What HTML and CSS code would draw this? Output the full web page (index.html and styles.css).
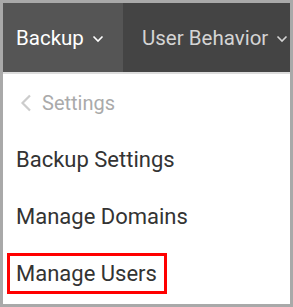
FILE: index.html
```html
<!DOCTYPE html>
<html>
<head>
<meta charset="utf-8">
<link rel="stylesheet" href="styles.css">
</head>
<body>
<div class="frame">
  <div class="header">
    <div class="tab tab-active">Backup <svg class="caret" width="12" height="8" viewBox="0 0 12 8"><path d="M1.5 1.5 L6 6 L10.5 1.5" fill="none" stroke="currentColor" stroke-width="1.6"/></svg></div>
    <div class="tab tab-other">User Behavior <svg class="caret" width="12" height="8" viewBox="0 0 12 8"><path d="M1.5 1.5 L6 6 L10.5 1.5" fill="none" stroke="currentColor" stroke-width="1.6"/></svg></div>
  </div>
  <div class="menu">
    <div class="row back"><svg class="back-icon" width="12" height="18" viewBox="0 0 12 18"><path d="M10 1.5 L2.5 9 L10 16.5" fill="none" stroke="currentColor" stroke-width="2.2"/></svg><span>Settings</span></div>
    <div class="row">Backup Settings</div>
    <div class="row">Manage Domains</div>
    <div class="row"><span class="highlight">Manage Users</span></div>
  </div>
</div>
</body>
</html>
```
FILE: styles.css
```css
html, body { margin: 0; padding: 0; background: #fff; }
.frame {
  width: 293px;
  height: 307px;
  box-sizing: border-box;
  border: 3px solid #a9a9a9;
  font-family: Roboto, "Liberation Sans", sans-serif;
  overflow: hidden;
  background: #fff;
}
.header {
  display: flex;
  height: 69px;
  border-bottom: 2px solid #dcdcdc;
}
.tab {
  display: flex;
  align-items: center;
  font-size: 20.5px;
  white-space: nowrap;
}
.tab-active {
  width: 120px;
  flex: none;
  box-sizing: border-box;
  padding-left: 13px;
  background: #555555;
  color: #ffffff;
}
.tab-other {
  flex: 1;
  padding-left: 19px;
  background: #444444;
  color: #d4d4d4;
  overflow: hidden;
}
.caret { margin-left: 8px; margin-top: 2px; }
.menu { display: flex; flex-direction: column; }
.row {
  height: 57px;
  display: flex;
  align-items: center;
  padding-left: 13px;
  font-size: 22px;
  color: #333333;
}
.back { color: #aaaaaa; font-size: 20px; }
.back-icon { color: #cccccc; margin-left: 4px; margin-right: 10px; }
.row:last-child { padding-left: 4px; }
.highlight {
  border: 3px solid #ff0000;
  padding: 0 7px 0 6px;
  height: 35px;
  display: flex;
  align-items: center;
}
```
